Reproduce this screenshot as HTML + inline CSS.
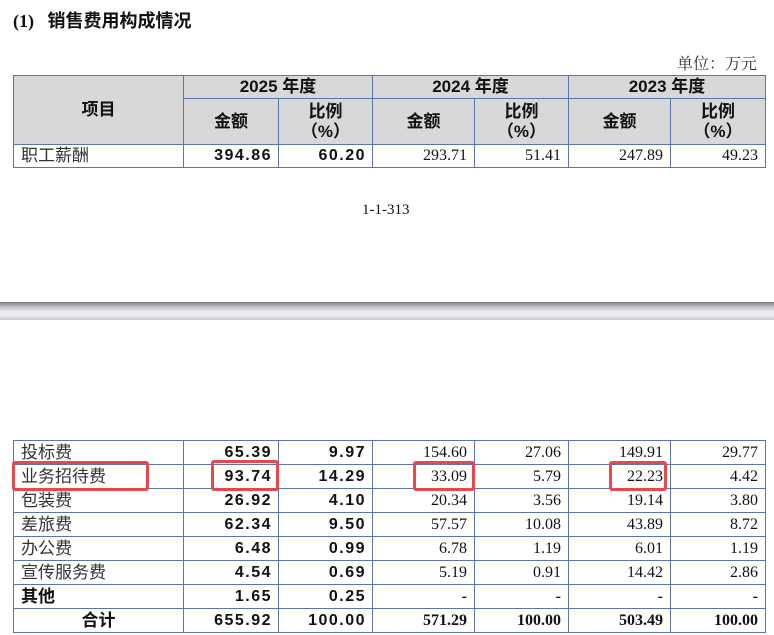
<!DOCTYPE html>
<html><head><meta charset="utf-8"><style>
body{margin:0;width:774px;height:635px;background:#fff;position:relative;overflow:hidden;font-family:"Liberation Serif","Noto Serif CJK SC",serif;color:#111}
.abs{position:absolute}
table{position:absolute;left:13px;border-collapse:collapse;table-layout:fixed}
td{border:1px solid #5b74ad;padding:0 7px;font-size:16px;white-space:nowrap;overflow:hidden;line-height:18px}
.h{background:#d8d8d8;text-align:center;font-family:"Liberation Sans","Noto Sans CJK SC",sans-serif;font-weight:bold;font-size:17px;line-height:20px}
.n{text-align:right;font-family:"Liberation Sans",sans-serif;font-weight:bold;letter-spacing:1.5px;font-size:16px;padding-right:6px}
.s{text-align:right;font-size:16px}
.c{font-family:"Liberation Serif","Noto Sans CJK SC",sans-serif;color:#333;font-size:17px}
.b{font-weight:bold;font-family:"Liberation Serif","Noto Sans CJK SC",sans-serif}
.red{position:absolute;border:3px solid #e8474c;border-radius:3px}
</style></head><body>
<div class="abs" style="left:13px;top:7px;font-size:18px;font-weight:bold;font-family:'Liberation Serif','Noto Sans CJK SC',serif">(1)&nbsp;&nbsp;&nbsp;销售费用构成情况</div>
<div class="abs" style="left:677px;top:51px;font-size:16px;color:#333;font-family:'Liberation Serif','Noto Serif CJK SC',serif">单位：万元</div>
<table style="top:75px">
<colgroup><col style="width:170px"><col style="width:95px"><col style="width:94px"><col style="width:102px"><col style="width:94px"><col style="width:102px"><col style="width:95px"></colgroup>
<tr style="height:23px"><td class="h" rowspan="2">项目</td><td class="h" colspan="2">2025 年度</td><td class="h" colspan="2">2024 年度</td><td class="h" colspan="2">2023 年度</td></tr>
<tr style="height:46px"><td class="h">金额</td><td class="h">比例<br>（%）</td><td class="h">金额</td><td class="h">比例<br>（%）</td><td class="h">金额</td><td class="h">比例<br>（%）</td></tr>
<tr style="height:23px"><td class="c">职工薪酬</td><td class="n">394.86</td><td class="n">60.20</td><td class="s">293.71</td><td class="s">51.41</td><td class="s">247.89</td><td class="s">49.23</td></tr>
</table>
<div class="abs" style="left:362px;top:202px;font-size:15px">1-1-313</div>
<div class="abs" style="left:0;top:302px;width:774px;height:18px;background:linear-gradient(#7a7a7a,#bdbdbd 25%,#e6e7ea 50%,#eef0f3 70%,#c9cacd 100%)"></div>
<table style="top:440px">
<colgroup><col style="width:170px"><col style="width:95px"><col style="width:94px"><col style="width:102px"><col style="width:94px"><col style="width:102px"><col style="width:95px"></colgroup>
<tr style="height:24px"><td class="c">投标费</td><td class="n">65.39</td><td class="n">9.97</td><td class="s">154.60</td><td class="s">27.06</td><td class="s">149.91</td><td class="s">29.77</td></tr>
<tr style="height:24px"><td class="c">业务招待费</td><td class="n">93.74</td><td class="n">14.29</td><td class="s">33.09</td><td class="s">5.79</td><td class="s">22.23</td><td class="s">4.42</td></tr>
<tr style="height:24px"><td class="c">包装费</td><td class="n">26.92</td><td class="n">4.10</td><td class="s">20.34</td><td class="s">3.56</td><td class="s">19.14</td><td class="s">3.80</td></tr>
<tr style="height:24px"><td class="c">差旅费</td><td class="n">62.34</td><td class="n">9.50</td><td class="s">57.57</td><td class="s">10.08</td><td class="s">43.89</td><td class="s">8.72</td></tr>
<tr style="height:24px"><td class="c">办公费</td><td class="n">6.48</td><td class="n">0.99</td><td class="s">6.78</td><td class="s">1.19</td><td class="s">6.01</td><td class="s">1.19</td></tr>
<tr style="height:24px"><td class="c">宣传服务费</td><td class="n">4.54</td><td class="n">0.69</td><td class="s">5.19</td><td class="s">0.91</td><td class="s">14.42</td><td class="s">2.86</td></tr>
<tr style="height:24px"><td class="c b" style="color:#111">其他</td><td class="n">1.65</td><td class="n">0.25</td><td class="s b">-</td><td class="s b">-</td><td class="s b">-</td><td class="s b">-</td></tr>
<tr style="height:24px"><td class="h" style="background:#fff">合计</td><td class="n">655.92</td><td class="n">100.00</td><td class="s b">571.29</td><td class="s b">100.00</td><td class="s b">503.49</td><td class="s b">100.00</td></tr>
</table>
<div class="red" style="left:12px;top:461px;width:131px;height:24px"></div>
<div class="red" style="left:211px;top:460px;width:62px;height:25px"></div>
<div class="red" style="left:413px;top:461px;width:56px;height:24px"></div>
<div class="red" style="left:609px;top:461px;width:52px;height:24px"></div>
</body></html>
